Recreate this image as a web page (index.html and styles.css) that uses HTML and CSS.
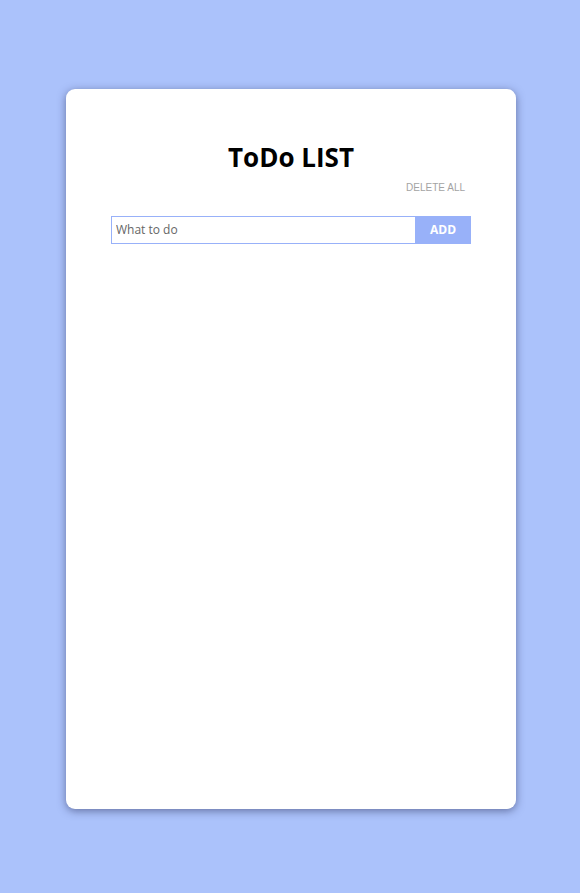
FILE: index.html
```html
<!DOCTYPE html>
<html>
<head>
<meta charset="utf-8">
<link rel="stylesheet" href="styles.css">
</head>
<body>
<div class="page">
  <div class="card">
    <h1 class="title">ToDo LIST</h1>
    <div class="actions"><button class="delete-all">DELETE ALL</button></div>
    <form class="add-form">
      <input class="todo-input" type="text" placeholder="What to do">
      <button class="add-btn" type="button">ADD</button>
    </form>
  </div>
</div>
</body>
</html>
```
FILE: styles.css
```css
html, body {
  margin: 0;
  padding: 0;
  background: #abc2fb;
  font-family: "Open Sans", sans-serif;
}
.page {
  display: flex;
  justify-content: center;
  padding-top: 89px;
  padding-left: 2px;
  height: 893px;
  box-sizing: border-box;
}
.card {
  width: 450px;
  height: 720px;
  background: #ffffff;
  border-radius: 9px;
  box-shadow: 0 2px 9px rgba(40, 45, 90, 0.55);
  box-sizing: border-box;
  padding: 0 45px;
}
.title {
  margin: 48px 0 0;
  text-align: center;
  font-size: 26px;
  font-weight: 700;
  line-height: 40px;
  color: #000;
}
.actions {
  display: flex;
  justify-content: flex-end;
  padding-right: 6px;
  margin-top: 4px;
}
.delete-all {
  border: none;
  background: none;
  padding: 0;
  font-family: "Liberation Sans", Arial, sans-serif;
  font-size: 10px;
  color: #a3a3a3;
  line-height: 14px;
}
.add-form {
  display: flex;
  margin-top: 21px;
}
.todo-input {
  flex: 1;
  height: 28px;
  box-sizing: border-box;
  border: 1px solid #98b1f9;
  border-right: none;
  padding: 0 0 2px 4px;
  font-family: "Open Sans", sans-serif;
  font-size: 12px;
  outline: none;
}
.todo-input::placeholder {
  color: #666;
}
.add-btn {
  width: 56px;
  height: 28px;
  border: none;
  background: #98b1f9;
  color: #fff;
  font-family: "Open Sans", sans-serif;
  font-weight: 700;
  font-size: 12px;
  padding: 0 0 2px;
}
```
